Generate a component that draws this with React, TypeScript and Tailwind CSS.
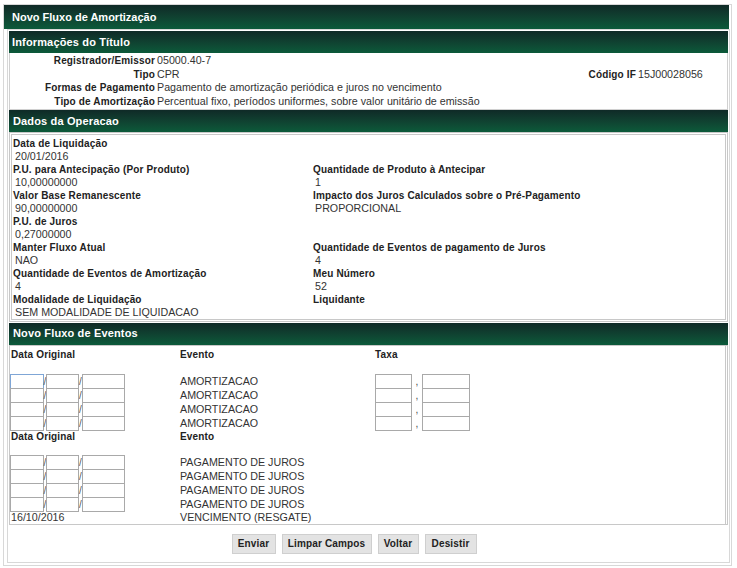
import React from "react";

const L = "font-bold text-[10px] tracking-[0.15px] text-[#222] whitespace-nowrap";
const V = "text-[10.7px] text-[#333] whitespace-nowrap";
const HDR =
  "h-[22px] flex items-center bg-linear-to-b from-[#0f2a27] to-[#0b5a3a] text-white font-bold text-[11px] tracking-[0.15px]";

function InfoRow({ label, value, extra }: { label: string; value: string; extra?: React.ReactNode }) {
  return (
    <div className="flex h-[13.5px] items-center leading-[13.5px]">
      <div className={`${L} w-[145px] text-right`}>{label}</div>
      <div className={`${V} ml-[2px] flex-1`}>{value}</div>
      {extra}
    </div>
  );
}

type Cell = { label?: string; value?: string };

function DCell({ c }: { c: Cell }) {
  return (
    <div>
      <div className={`${L} h-[13px] leading-[13px]`}>{c.label ?? ""}</div>
      <div className={`${V} h-[13px] leading-[13px] pl-[2px]`}>{c.value ?? ""}</div>
    </div>
  );
}

const dados: [Cell, Cell][] = [
  [{ label: "Data de Liquidação", value: "20/01/2016" }, {}],
  [
    { label: "P.U. para Antecipação (Por Produto)", value: "10,00000000" },
    { label: "Quantidade de Produto à Antecipar", value: "1" },
  ],
  [
    { label: "Valor Base Remanescente", value: "90,00000000" },
    { label: "Impacto dos Juros Calculados sobre o Pré-Pagamento", value: "PROPORCIONAL" },
  ],
  [{ label: "P.U. de Juros", value: "0,27000000" }, {}],
  [
    { label: "Manter Fluxo Atual", value: "NAO" },
    { label: "Quantidade de Eventos de pagamento de Juros", value: "4" },
  ],
  [
    { label: "Quantidade de Eventos de Amortização", value: "4" },
    { label: "Meu Número", value: "52" },
  ],
  [
    { label: "Modalidade de Liquidação", value: "SEM MODALIDADE DE LIQUIDACAO" },
    { label: "Liquidante", value: "" },
  ],
];

function DateInputs({ focus }: { focus?: boolean }) {
  return (
    <div className="flex h-[14px] items-start">
      <input
        className={`h-[15px] w-[34px] border bg-white outline-none ${focus ? "border-[#7fa6d6]" : "border-[#a9a9a9]"}`}
      />
      <span className="flex h-[14px] w-[2px] items-end justify-center overflow-visible text-[10px] leading-[12px] text-[#555]">
        /
      </span>
      <input className="h-[15px] w-[33px] border border-[#a9a9a9] bg-white outline-none" />
      <span className="flex h-[14px] w-[3px] items-end justify-center overflow-visible text-[10px] leading-[12px] text-[#555]">
        /
      </span>
      <input className="h-[15px] w-[43px] border border-[#a9a9a9] bg-white outline-none" />
    </div>
  );
}

function TaxaInputs() {
  return (
    <div className="flex h-[14px] items-start">
      <input className="h-[15px] w-[37px] border border-[#a9a9a9] bg-white outline-none" />
      <span className="flex h-[14px] w-[10px] items-end justify-center text-[10px] leading-[13px] text-[#444]">,</span>
      <input className="h-[15px] w-[48px] border border-[#a9a9a9] bg-white outline-none" />
    </div>
  );
}

function EvRow({ evento, taxa, focus }: { evento: string; taxa?: boolean; focus?: boolean }) {
  return (
    <div className="grid h-[14px] grid-cols-[170px_195px_1fr]">
      <DateInputs focus={focus} />
      <div className={`${V} leading-[14px]`}>{evento}</div>
      <div>{taxa ? <TaxaInputs /> : null}</div>
    </div>
  );
}

function Btn({ children, w }: { children: string; w: string }) {
  return (
    <button
      className={`${w} h-[20px] border border-[#cfcfcf] bg-[#e3e3e3] text-center text-[10px] font-bold tracking-[0.15px] text-[#222]`}
    >
      {children}
    </button>
  );
}

export default function App() {
  return (
    <div className="min-h-[568px] bg-white pl-[3px] pt-[4px] font-['Liberation_Sans',Arial,sans-serif]">
      <div className="w-[729px] border border-[#d8d8d8] pb-[2px]">
        <div className="mr-[2px] flex h-[24px] items-center bg-linear-to-b from-[#0f2a27] to-[#0b5a3a] pl-[8px] text-[11px] font-bold text-white">
          Novo Fluxo de Amortização
        </div>
        <div className="ml-[3px] mr-[1px] border border-[#d8d8d8] p-[1px] pb-[8px]">
          {/* Informações do Título */}
          <div className={`${HDR} pl-[3px]`}>Informações do Título</div>
          <div className="border-x border-b border-[#d0d0d0] py-[1px]">
            <InfoRow label="Registrador/Emissor" value="05000.40-7" />
            <InfoRow
              label="Tipo"
              value="CPR"
              extra={
                <div className="flex w-[150px] items-center">
                  <div className={`${L} w-[59px] text-right`}>Código IF</div>
                  <div className={`${V} ml-[2px] flex-1`}>15J00028056</div>
                </div>
              }
            />
            <InfoRow label="Formas de Pagamento" value="Pagamento de amortização periódica e juros no vencimento" />
            <InfoRow
              label="Tipo de Amortização"
              value="Percentual fixo, períodos uniformes, sobre valor unitário de emissão"
            />
          </div>

          {/* Dados da Operacao */}
          <div className={`${HDR} pl-[4px]`}>Dados da Operacao</div>
          <div className="border-[3px] border-double border-[#c8c8c8] pl-[1px] pt-[1.5px]">
            <div className="grid grid-cols-[300px_1fr]">
              {dados.map(([a, b], i) => (
                <React.Fragment key={i}>
                  <DCell c={a} />
                  <DCell c={b} />
                </React.Fragment>
              ))}
            </div>
          </div>

          {/* Novo Fluxo de Eventos */}
          <div className={`${HDR} mt-[1px] pl-[4px]`}>Novo Fluxo de Eventos</div>
          <div className="border-[3px] border-double border-[#c8c8c8] border-l-[1px] border-t-[1px] border-b-[1px] pt-[2px]">
            <div className="grid h-[13px] grid-cols-[170px_195px_1fr] leading-[13px]">
              <div className={`${L} pl-[1px]`}>Data Original</div>
              <div className={L}>Evento</div>
              <div className={L}>Taxa</div>
            </div>
            <div className="h-[13px]" />
            <EvRow evento="AMORTIZACAO" taxa focus />
            <EvRow evento="AMORTIZACAO" taxa />
            <EvRow evento="AMORTIZACAO" taxa />
            <EvRow evento="AMORTIZACAO" taxa />
            <div className="grid h-[13px] grid-cols-[170px_195px_1fr] leading-[13px]">
              <div className={`${L} pl-[1px]`}>Data Original</div>
              <div className={L}>Evento</div>
              <div />
            </div>
            <div className="h-[12px]" />
            <EvRow evento="PAGAMENTO DE JUROS" />
            <EvRow evento="PAGAMENTO DE JUROS" />
            <EvRow evento="PAGAMENTO DE JUROS" />
            <EvRow evento="PAGAMENTO DE JUROS" />
            <div className="grid h-[13px] grid-cols-[170px_195px_1fr] leading-[13px]">
              <div className={`${V} pl-[1px]`}>16/10/2016</div>
              <div className={V}>VENCIMENTO (RESGATE)</div>
              <div />
            </div>
          </div>

          {/* Buttons */}
          <div className="flex justify-center gap-[6px] pr-[29px] pt-[9px]">
            <Btn w="w-[44px]">Enviar</Btn>
            <Btn w="w-[90px]">Limpar Campos</Btn>
            <Btn w="w-[41px]">Voltar</Btn>
            <Btn w="w-[52px]">Desistir</Btn>
          </div>
        </div>
      </div>
    </div>
  );
}
